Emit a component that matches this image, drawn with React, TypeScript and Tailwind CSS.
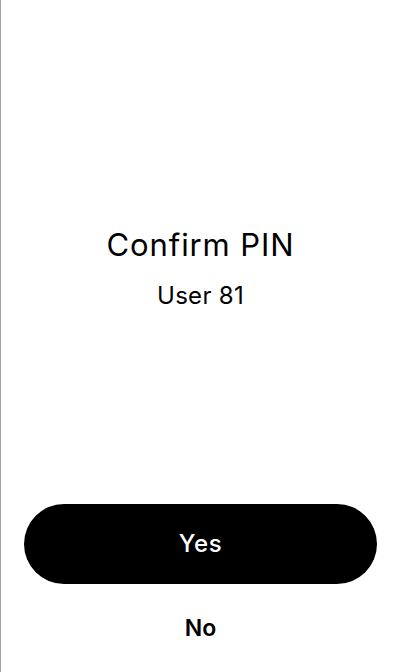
import React from 'react'

export default function App() {
    return (
        <div
            className="h-[672px] w-[400px] bg-white border-l border-[#a0a0a0] flex flex-col text-black"
            style={{ fontFamily: 'Inter, "Noto Sans", sans-serif' }}
        >
            <div className="flex-1 flex flex-col items-center pt-[227px]">
                <h1 className="text-[31px] leading-[36px] font-normal tracking-[0.9px]">Confirm PIN</h1>
                <p className="mt-[19px] text-[24px] leading-[28px] tracking-[0.3px]">User 81</p>
            </div>
            <div className="px-[23px] pb-[20px] flex flex-col items-center">
                <button className="w-full h-[80px] rounded-full bg-black text-white text-[24px] font-medium tracking-[0.6px]">
                    Yes
                </button>
                <button className="mt-[20px] h-[48px] text-[23px] font-semibold">No</button>
            </div>
        </div>
    )
}
